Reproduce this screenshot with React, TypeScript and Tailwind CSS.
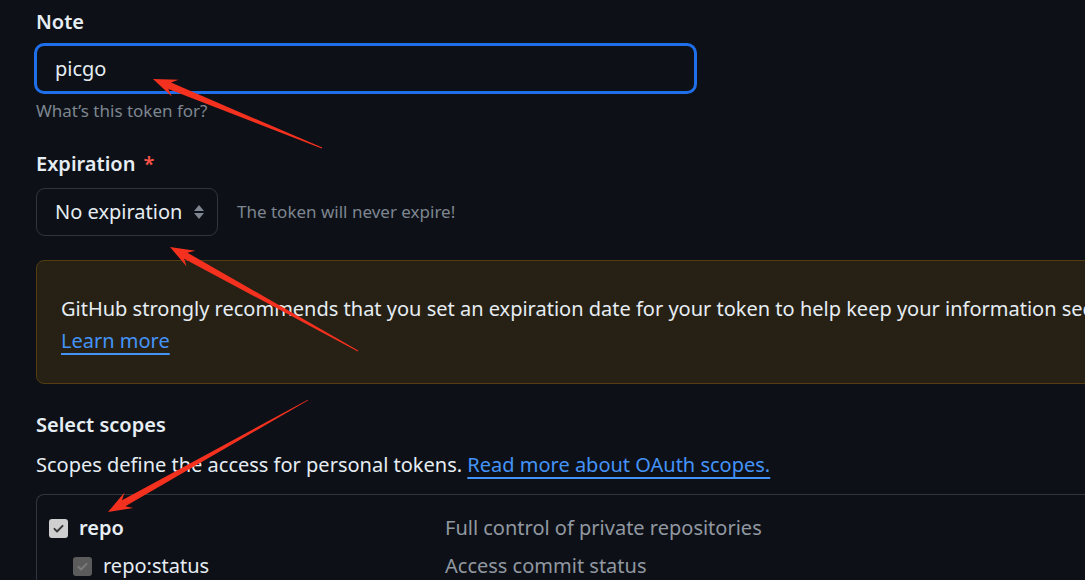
const font = { fontFamily: '"Noto Sans", "Open Sans", sans-serif' };

type Pt = [number, number];

function arrowPoints(tail: Pt, tip: Pt) {
  const dx = tip[0] - tail[0];
  const dy = tip[1] - tail[1];
  const len = Math.hypot(dx, dy);
  const ux = dx / len;
  const uy = dy / len;
  const nx = -uy;
  const ny = ux;
  const headLen = 24;
  const headW = 9;
  const neckW = 3.5;
  const base: Pt = [tip[0] - ux * headLen, tip[1] - uy * headLen];
  const neck: Pt = [tip[0] - ux * (headLen - 6), tip[1] - uy * (headLen - 6)];
  const pts: Pt[] = [
    [tail[0] + nx * 0.4, tail[1] + ny * 0.4],
    [neck[0] + nx * neckW, neck[1] + ny * neckW],
    [base[0] + nx * headW, base[1] + ny * headW],
    tip,
    [base[0] - nx * headW, base[1] - ny * headW],
    [neck[0] - nx * neckW, neck[1] - ny * neckW],
    [tail[0] - nx * 0.4, tail[1] - ny * 0.4],
  ];
  return pts.map((p) => `${p[0].toFixed(1)},${p[1].toFixed(1)}`).join(" ");
}

function Check({ disabled }: { disabled?: boolean }) {
  return (
    <span
      className={
        "flex h-[19px] w-[19px] items-center justify-center rounded-[3px] " +
        (disabled ? "bg-[#5b5b5b]" : "bg-[#cfcfcf]")
      }
    >
      <svg width="13" height="13" viewBox="0 0 16 16">
        <path
          d="M3 8.5l3.2 3.2L13 4.8"
          fill="none"
          stroke={disabled ? "#7a7a7a" : "#3a3a3a"}
          strokeWidth="2.4"
          strokeLinecap="round"
          strokeLinejoin="round"
        />
      </svg>
    </span>
  );
}

export default function App() {
  return (
    <div className="relative h-[580px] w-[1085px] overflow-hidden bg-[#0d1117] text-[#e6edf3]" style={font}>
      <div className="w-[1120px] pl-9 pt-[7px]">
        {/* Note */}
        <div className="text-[20px] font-semibold leading-[30px]">Note</div>
        <div className="mt-[6px] flex h-[51px] w-[663px] -ml-[2px] items-center rounded-[10px] border-[3px] border-[#1f6feb] pl-[18px] text-[20px]">
          picgo
        </div>
        <div className="mt-[5px] text-[17px] leading-[24px] text-[#7d8590]">What’s this token for?</div>

        {/* Expiration */}
        <div className="mt-[26px] flex items-center text-[20px] font-semibold leading-[30px]">
          Expiration <span className="ml-[8px] text-[#f85149]">*</span>
        </div>
        <div className="mt-[9px] flex items-center">
          <div className="flex h-[48px] w-[182px] items-center justify-between rounded-[9px] border border-[#30363d] pl-[18px] pr-[12px] text-[20px]">
            <span>No expiration</span>
            <svg width="12" height="18" viewBox="0 0 12 18">
              <path d="M6 2l5 6H1z M6 16l5-6H1z" fill="#7d8590" />
            </svg>
          </div>
          <span className="ml-[19px] text-[17px] text-[#7d8590]">The token will never expire!</span>
        </div>

        {/* Warning */}
        <div className="mt-[24px] h-[124px] rounded-[8px] border border-[#533d11] bg-[#272115] pl-[24px] pt-[32px] text-[20px] leading-[32px]">
          <div className="whitespace-nowrap">
            GitHub strongly recommends that you set an expiration date for your token to help keep your information secure.
          </div>
          <a className="text-[#4493f8] underline decoration-2 underline-offset-[5px]">Learn more</a>
        </div>

        {/* Scopes */}
        <div className="mt-[26px] text-[20px] font-semibold leading-[30px]">Select scopes</div>
        <div className="mt-[10px] text-[20px] leading-[30px]">
          Scopes define the access for personal tokens.{" "}
          <a className="text-[#4493f8] underline decoration-2 underline-offset-[5px]">Read more about OAuth scopes.</a>
        </div>
        <div className="mt-[14px] rounded-tl-[8px] border-l border-t border-[#30363d] pt-[18px]">
          <div className="flex items-center">
            <div className="flex w-[408px] items-center gap-[11px] pl-[12px]">
              <Check />
              <span className="text-[20px] font-semibold">repo</span>
            </div>
            <span className="text-[20px] text-[#9198a1]">Full control of private repositories</span>
          </div>
          <div className="mt-[8px] flex items-center">
            <div className="flex w-[408px] items-center gap-[11px] pl-[36px]">
              <Check disabled />
              <span className="text-[20px]">repo:status</span>
            </div>
            <span className="text-[20px] text-[#9198a1]">Access commit status</span>
          </div>
        </div>
      </div>

      {/* annotation arrows */}
      <svg className="pointer-events-none absolute inset-0" width="1085" height="580">
        <polygon points={arrowPoints([322, 148], [153, 79])} fill="#f4301f" />
        <polygon points={arrowPoints([358, 351], [170, 247])} fill="#f4301f" />
        <polygon points={arrowPoints([308, 400], [108, 512])} fill="#f4301f" />
      </svg>
    </div>
  );
}
